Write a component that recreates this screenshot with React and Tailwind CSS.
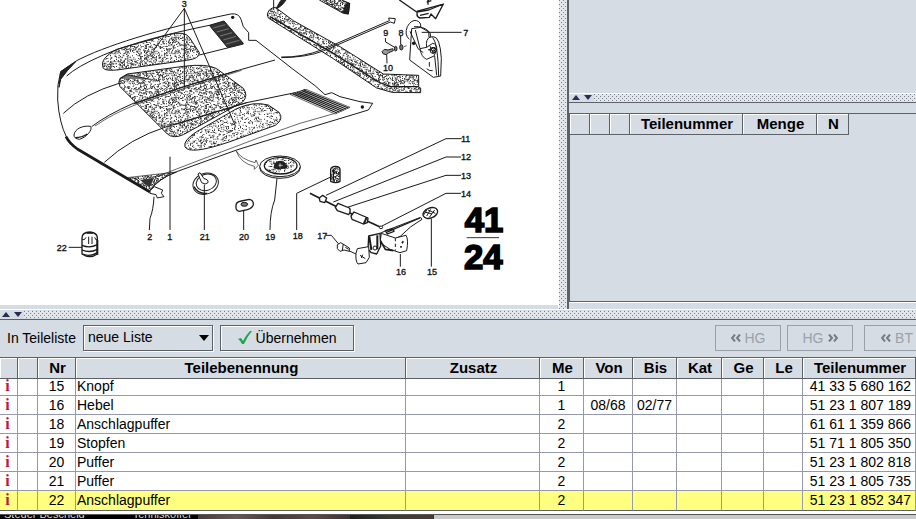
// src/App.jsx
import React from 'react';

const DOTS =
  '[background-image:conic-gradient(at_1px_1px,transparent_75%,#7b828c_0),conic-gradient(at_1px_1px,transparent_75%,#7b828c_0)] [background-size:4px_4px] [background-position:0_0,2px_2px]';

const parts = [
  { nr: 15, name: 'Knopf', qty: 1, number: '41 33 5 680 162' },
  { nr: 16, name: 'Hebel', qty: 1, from: '08/68', to: '02/77', number: '51 23 1 807 189' },
  { nr: 18, name: 'Anschlagpuffer', qty: 2, number: '61 61 1 359 866' },
  { nr: 19, name: 'Stopfen', qty: 2, number: '51 71 1 805 350' },
  { nr: 20, name: 'Puffer', qty: 2, number: '51 23 1 802 818' },
  { nr: 21, name: 'Puffer', qty: 2, number: '51 23 1 805 735' },
  { nr: 22, name: 'Anschlagpuffer', qty: 2, number: '51 23 1 852 347', selected: true },
];

// Random dots for the insulation pads and rubber seals
const stipple = (count, seed) => {
  let s = seed;
  const next = () => {
    s = (s * 16807) % 2147483647;
    return s / 2147483647;
  };
  let d = '';
  for (let i = 0; i < count; i++) {
    d += `M${Math.floor(next() * 90) * 2} ${Math.floor(next() * 90) * 2}h3v3h-3z`;
  }
  return d;
};

const DOTS_LIGHT = stipple(900, 11);
const DOTS_MID = stipple(1600, 42);
const DOTS_DARK = stipple(2300, 97);

const Patterns = () => (
  <defs>
    <pattern id="light" width="180" height="180" patternUnits="userSpaceOnUse">
      <path d={DOTS_LIGHT} fill="#333" stroke="none" />
    </pattern>
    <pattern id="mid" width="180" height="180" patternUnits="userSpaceOnUse">
      <path d={DOTS_MID} fill="#333" stroke="none" />
    </pattern>
    <pattern id="dark" width="180" height="180" patternUnits="userSpaceOnUse">
      <path d={DOTS_DARK} fill="#222" stroke="none" />
    </pattern>
  </defs>
);

const Hood = () => (
  <g transform="translate(120 0)">
    <path d="M62 215L110 182C190 140 350 88 572 42Q596 38 603 58L610 80L626 98V121H648L762 210L825 257L855 284L875 278L900 290L960 305L998 310L985 330L660 428L590 450L410 515Q350 540 330 570" />
    <path d="M62 215Q50 255 53 300Q58 370 80 412" />
    <path d="M78 410Q88 430 112 447L330 576" strokeWidth="8" />
    <path d="M80 228Q110 200 190 165Q300 118 508 76" />
    <path d="M62 215L108 184L82 212L62 238L57 262Z" fill="#222" />
    <path d="M70 340Q130 282 240 249M478 165L610 132" />
    <path d="M155 380Q200 345 280 310L432 260L605 208L705 180" />
    <path d="M165 378Q220 340 290 313L438 264L605 211" strokeWidth="2" />
    <path d="M193 487Q270 415 380 380L480 350L620 308L780 275L795 268" />
    <path d="M350 530L480 480L660 412L780 370L885 340" strokeWidth="2" />
    <path d="M102 405C104 385 130 376 152 379C158 390 140 412 118 418Q102 416 102 405Z" fill="#fff" />
    <path d="M106 413Q125 413 142 402" strokeWidth="4" />

    <path d="M190 205C180 182 200 165 230 148L385 104Q435 92 448 112L478 158Q480 176 440 181L230 210Q198 213 190 205Z" fill="url(#mid)" />
    <path d="M240 235L262 222L430 199Q500 190 530 206L610 265Q626 287 608 306L430 404Q400 417 382 402L240 260Q233 245 240 235Z" fill="url(#mid)" />
    <path d="M435 441Q428 422 470 395L590 326Q640 303 685 315L717 337Q733 357 706 376L570 425Q450 466 435 441Z" fill="url(#light)" />
    <path d="M240 236L262 224L330 238" fill="#777" />
    <path d="M280 312L432 260L590 212M400 375L620 308" />

    <path d="M508 76L552 63L610 130L562 142Z" fill="#333" />
    <path d="M520 84L556 74M530 96L566 86M540 108L576 98M550 120L588 109M558 132L598 121" stroke="#999" strokeWidth="2" />
    <path d="M750 283L798 268L930 322L885 342Z" fill="#fff" strokeWidth="2" />
    <path d="M757 281L891 339M764 279L898 336M771 277L905 333M778 275L911 330M785 272L918 327M792 270L925 324" strokeWidth="4" />
    <circle cx="578" cy="52" r="5" fill="#111" stroke="none" />
    <circle cx="967" cy="321" r="5" fill="#111" stroke="none" />

    <path d="M260 533L410 516Q360 532 328 574Z" fill="url(#dark)" strokeWidth="2" />
    <path d="M300 540L342 535L328 562Z" fill="#333" stroke="none" />
    <path d="M330 572L343 560L368 570L364 580L372 590L352 594L348 584L330 580Z" fill="#fff" />

    <path d="M433 25L340 152M433 25V260M433 25L587 380M390 470V690" />
    <path d="M588 452Q604 478 645 488L648 480L655 496L643 508V499Q602 490 588 452Z" strokeWidth="2" />
    <path d="M342 590Q340 630 330 655L328 690" />
  </g>
);

const Seal = () => (
  <g transform="translate(780 0)">
    <path d="M22 45Q24 25 46 22L100 62L240 140L370 222L476 226V262L482 264V278L396 277L350 264L220 176L25 54Z" fill="url(#mid)" />
    <path d="M30 50L220 160L355 246L390 260H475" strokeWidth="4" />
    <path d="M48 26L62 2L78 0Q68 16 54 24Z" fill="#222" />
    <path d="M178 0L250 40L265 42L269 10L245 0" fill="url(#dark)" />
    <path d="M250 38L258 12L269 10L265 42Z" fill="#222" />
    <path d="M41 0V30" />
    <path d="M64 171Q125 173 190 148L388 62L386 54L406 56L403 70L391 66L190 153Q140 172 64 173" />

    <path d="M418 0L470 36L506 30L550 12L527 56L513 42L508 52L480 54Q468 50 472 37" fill="#fff" strokeWidth="4" />
    <path d="M470 34L545 14M500 6L514 2M480 46L506 40M504 0V14" strokeWidth="4" />
    <path d="M448 118Q432 104 442 80Q454 58 470 62Q484 66 482 82L455 86L449 180L520 232L542 228L544 175Q540 110 520 110L507 112L506 94Q490 78 462 80" fill="#fff" />
    <path d="M482 82L510 98L512 110Q496 116 500 142L480 146L466 90" />
    <path d="M480 146Q484 172 500 178L522 168L530 150Q532 132 518 130L500 142" />
    <path d="M518 112Q534 130 536 228M524 168L530 226M450 94L474 146L490 158M504 150L526 142M510 138L520 162M508 186V200M500 206Q508 214 518 212" />
    <circle cx="461" cy="130" r="4" fill="#111" />
    <circle cx="519" cy="151" r="9" fill="url(#dark)" />
    <path d="M485 97H605M376 114L377 126L404 142M422 108V134M380 164L381 190" />
    <path d="M366 155L373 148L384 150L398 146L400 152L386 158L380 164L370 162Z" fill="#999" />
    <ellipse cx="407" cy="146" rx="4" ry="7" fill="#777" />
    <ellipse cx="424" cy="142" rx="5" ry="8" fill="#777" />
    <path d="M432 140L440 137" strokeWidth="2" />
  </g>
);

const SmallParts = () => (
  <g transform="translate(120 420)">
    <ellipse cx="497" cy="131" rx="39" ry="31" fill="#fff" transform="rotate(-20 497 131)" />
    <ellipse cx="499" cy="127" rx="31" ry="24" fill="#fff" transform="rotate(-20 499 127)" />
    <path d="M474 102L480 98L492 116Q506 118 504 128Q496 136 485 128Z" fill="#fff" />
    <path d="M462 140Q474 163 502 160" strokeWidth="4" />
    <path d="M493 134V270M611 196V270M712 106L704 180Q690 215 690 270" />
    <path d="M588 196Q588 186 604 183L628 178Q641 180 640 194Q638 204 622 209L598 214Q586 212 588 196Z" fill="#fff" strokeWidth="4" />
    <ellipse cx="613" cy="193" rx="10" ry="6" fill="#777" />

    <ellipse cx="720" cy="83" rx="61" ry="32" fill="#fff" />
    <ellipse cx="720" cy="79" rx="61" ry="31" fill="#fff" />
    <ellipse cx="722" cy="77" rx="49" ry="25" fill="url(#light)" strokeWidth="4" />
    <path d="M702 84Q704 64 720 64Q738 64 741 82Q722 90 702 84Z" fill="#222" />
    <path d="M716 76H728M720 70V82" stroke="#fff" strokeWidth="2" />

    <path d="M126 340V294Q126 277 150 276Q172 278 172 294V342Q150 358 126 342Z" fill="#fff" strokeWidth="4" />
    <path d="M126 296Q132 304 138 292M146 290V312M156 290V312M164 292Q168 304 172 298M140 280L160 280" />
    <path d="M126 316Q150 326 172 314M126 330Q150 340 172 328M128 342Q150 352 172 338" strokeWidth="4" />
    <path d="M172 300V344" strokeWidth="6" />
    <path d="M86 322H126" />
  </g>
);

const Lever = () => (
  <g transform="translate(840 360)">
    <path d="M545 56H498L138 226M543 111H498L160 246M543 166H498L202 262M543 220H498L306 318M50 330V220L150 172M138 346H154L176 372M361 402V440M454 296V440" />
    <path d="M152 148Q154 140 166 139Q180 140 180 148V184Q168 192 152 184Z" fill="url(#dark)" strokeWidth="4" />
    <path d="M160 146V182" strokeWidth="4" />
    <path d="M90 220L170 260M208 278L302 322" strokeWidth="5" />
    <path d="M118 234L128 226L140 234L134 248L120 244Z" fill="#fff" strokeWidth="4" />
    <path d="M166 262L174 250L208 264Q214 272 206 284L172 272Z" fill="#fff" strokeWidth="4" />
    <path d="M213 288L222 276L264 294L262 308L250 312L216 298Z" fill="#fff" strokeWidth="4" />
    <path d="M252 310L260 292" strokeWidth="6" />
    <ellipse cx="303" cy="322" rx="5" ry="4" fill="#fff" />

    <path d="M300 340L318 332L422 292L426 298Q390 318 362 348L346 356L306 344" fill="#fff" />
    <path d="M318 338L345 326L420 294M316 332L338 326L342 334L322 342Z" strokeWidth="4" />
    <path d="M304 340L346 354L378 346Q386 358 380 392L360 398L330 388L300 368Z" fill="#fff" />
    <path d="M346 354V392" strokeDasharray="10 7" />
    <path d="M366 370L370 364M363 383V378M300 360L316 388L340 392" strokeWidth="5" />
    <path d="M266 348L300 340L302 378L290 402L274 398L264 388Z" fill="#fff" strokeWidth="4" />
    <path d="M268 350L274 390M292 346L292 388" strokeWidth="6" />
    <circle cx="285" cy="384" r="6" />
    <path d="M232 386L266 380L268 412L258 428L234 432Q226 424 228 400Z" fill="#fff" />
    <path d="M240 406L256 416M248 404L244 414M206 392L228 402" />
    <path d="M172 374L182 368L192 374L208 384V394L192 390L180 394L172 386Z" fill="#fff" />
    <path d="M190 372L187 390M196 382L206 388" />
    <ellipse cx="451" cy="279" rx="23" ry="15" fill="#fff" strokeWidth="4" transform="rotate(-22 451 279)" />
    <path d="M432 284L440 270M440 288L452 268M448 292L464 270M434 276L456 282M444 270L466 280" />
  </g>
);

const callouts = [
  { n: 3, x: 553, y: 20 },
  { n: 7, x: 1397, y: 107 },
  { n: 9, x: 1157, y: 109 },
  { n: 8, x: 1203, y: 109 },
  { n: 10, x: 1164, y: 214 },
  { n: 11, x: 1397, y: 426 },
  { n: 12, x: 1398, y: 481 },
  { n: 13, x: 1398, y: 536 },
  { n: 14, x: 1398, y: 590 },
  { n: 2, x: 449, y: 719 },
  { n: 1, x: 509, y: 719 },
  { n: 21, x: 614, y: 719 },
  { n: 20, x: 732, y: 719 },
  { n: 19, x: 811, y: 719 },
  { n: 18, x: 893, y: 718 },
  { n: 17, x: 967, y: 718 },
  { n: 16, x: 1203, y: 826 },
  { n: 15, x: 1296, y: 826 },
  { n: 22, x: 185, y: 752 },
];

const Drawing = () => (
  <svg viewBox="0 0 1674 915" className="block w-full" role="img" aria-label="Bildtafel 41 24">
    <Patterns />
    <g fill="none" stroke="#1a1a1a" strokeWidth="3" strokeLinejoin="round">
      <Seal />
      <Hood />
      <SmallParts />
      <Lever />
    </g>
    <g fontFamily="Liberation Sans, sans-serif" fontSize="27" textAnchor="middle" fill="#111" stroke="#111" strokeWidth="1">
      {callouts.map((c) => (
        <text key={c.n} x={c.x} y={c.y}>{c.n}</text>
      ))}
    </g>
    <g fontFamily="Liberation Sans, sans-serif" fontSize="104" fontWeight="700" textAnchor="middle" fill="#000" stroke="#000" strokeWidth="5">
      <text x="1452" y="696">41</text>
      <text x="1450" y="808">24</text>
    </g>
    <path d="M1400 713H1497" stroke="#333" strokeWidth="3" />
  </svg>
);

const SplitArrows = () => (
  <div className="flex gap-1 bg-[#d6dce4] px-0.5">
    <button type="button" aria-label="Nach oben" className="h-2 w-2">
      <svg viewBox="0 0 8 8" className="block h-2 w-2"><path d="M0 6L4 1L8 6Z" fill="#2b2b55" /></svg>
    </button>
    <button type="button" aria-label="Nach unten" className="h-2 w-2">
      <svg viewBox="0 0 8 8" className="block h-2 w-2"><path d="M0 1H8L4 6Z" fill="#2b2b55" /></svg>
    </button>
  </div>
);

const HorizontalSplit = () => (
  <div className="flex h-[11px] border-t border-b border-t-white border-b-[#5c6067] bg-[#d6dce4] py-px">
    <SplitArrows />
    <div className={`flex-1 bg-[#e3e7ec] ${DOTS}`} />
  </div>
);

const SideHead = ({ children, className }) => (
  <th className={`h-[21px] border-r border-b border-[#5c6067] py-0 pr-0 pl-0.5 text-[15px] leading-5 font-bold shadow-[inset_1px_1px_0_#fff] ${className}`}>
    {children}
  </th>
);

const SidePanel = () => (
  <div className="flex w-[347px] shrink-0 flex-col">
    <div className="h-[93px]" />
    <div className="flex h-2.5 border-t border-b border-t-white border-b-[#5c6067] pl-px">
      <SplitArrows />
      <div className={`flex-1 bg-[#e3e7ec] ${DOTS}`} />
    </div>
    <div className="mt-2.5 flex-1 border-t border-b border-l border-[#5c6067]">
      <table className="border-separate border-spacing-0">
        <thead>
          <tr>
            <SideHead className="w-5" />
            <SideHead className="w-5" />
            <SideHead className="w-5" />
            <SideHead className="w-[113px]">Teilenummer</SideHead>
            <SideHead className="w-[74px]">Menge</SideHead>
            <SideHead className="w-8">N</SideHead>
          </tr>
        </thead>
      </table>
    </div>
    <div className="h-[7px] border-t border-white" />
  </div>
);

const NavButton = ({ children, className = '' }) => (
  <button
    type="button"
    disabled
    className={`flex h-[26px] w-[66px] shrink-0 items-center justify-center gap-1 border border-[#9aa0a9] text-[#9ba1aa] ${className}`}
  >
    {children}
  </button>
);

const Chevrons = ({ right }) => (
  <svg viewBox="0 0 10 8" className={`h-2 w-2.5 ${right ? 'rotate-180' : ''}`}>
    <path d="M4 0.5L1 4L4 7.5M9 0.5L6 4L9 7.5" fill="none" stroke="#757b84" strokeWidth="2" />
  </svg>
);

const Toolbar = () => (
  <div className="flex h-[37px] items-start overflow-hidden pt-[5px] pl-[7px]">
    <label htmlFor="list" className="w-[76px] shrink-0 leading-[26px] whitespace-nowrap">In Teileliste</label>
    <div className="relative mr-[7px] shrink-0">
      <select
        id="list"
        className="block h-[26px] w-[130px] appearance-none border border-[#5c6067] bg-[#d6dce4] pl-1 pb-0.5 shadow-[inset_1px_1px_0_#fff,1px_1px_0_#fff]"
      >
        <option>neue Liste</option>
      </select>
      <svg viewBox="0 0 10 6" className="pointer-events-none absolute top-2.5 right-1 h-1.5 w-2.5">
        <path d="M0 0H10L5 6Z" fill="#000" />
      </svg>
    </div>
    <button
      type="button"
      className="flex h-[26px] w-[134px] shrink-0 items-center justify-center gap-1 border border-[#5c6067] shadow-[inset_1px_1px_0_#fff,1px_1px_0_#fff]"
    >
      <svg viewBox="0 0 14 14" className="h-3.5 w-3.5">
        <path d="M0 8L3 7L5 10Q8 4 12 0L14 0Q9 6 6 13H4Q3 10 0 8Z" fill="#1fa64a" />
      </svg>
      Übernehmen
    </button>
    <div className="ml-auto flex">
      <NavButton><Chevrons />HG</NavButton>
      <NavButton className="ml-1.5">HG<Chevrons right /></NavButton>
      <NavButton className="-mr-3.5 ml-[11px]"><Chevrons />BT</NavButton>
    </div>
  </div>
);

const heads = ['', '', 'Nr', 'Teilebenennung', 'Zusatz', 'Me', 'Von', 'Bis', 'Kat', 'Ge', 'Le', 'Teilenummer'];

const PartRow = ({ part, partlyHidden, isLast }) => {
  const line = partlyHidden ? 'h-[17px] leading-[14px] pb-0.5' : isLast ? 'h-5 leading-[18px] pb-px' : 'h-[19px] leading-[18px]';
  const edge = isLast ? 'border-b-[#5c6067]' : 'border-b-[#9698b0]';
  const cell = `${line} ${edge} border-r border-b border-r-[#9698b0] whitespace-nowrap`;
  return (
    <tr className={part.selected ? 'bg-[#ffff80]' : 'bg-white'}>
      <td className={`${cell} pr-0.5`}>
        <span className="block text-center font-['Liberation_Serif',serif] text-[16px] leading-[14px] font-bold text-[#c01838]">i</span>
      </td>
      <td className={cell} />
      <td className={`${cell} text-center`}>{part.nr}</td>
      <td className={`${cell} pl-px`}>{part.name}</td>
      <td className={cell} />
      <td className={`${cell} text-center`}>{part.qty}</td>
      <td className={`${cell} text-center`}>{part.from}</td>
      <td className={`${cell} text-center`}>{part.to}</td>
      <td className={cell} />
      <td className={cell} />
      <td className={cell} />
      <td className={`${cell} pr-1 text-right`}>{part.number}</td>
    </tr>
  );
};

const PartsTable = () => (
  <table className="w-full table-fixed border-separate border-spacing-0 border-t border-[#5c6067]">
    <colgroup>
      <col className="w-[18px]" />
      <col className="w-5" />
      <col className="w-[38px]" />
      <col />
      <col className="w-[134px]" />
      <col className="w-11" />
      <col className="w-[49px]" />
      <col className="w-11" />
      <col className="w-[45px]" />
      <col className="w-[42px]" />
      <col className="w-[39px]" />
      <col className="w-[113px]" />
    </colgroup>
    <thead>
      <tr>
        {heads.map((h, i) => (
          <th key={i} className="h-[21px] border-r border-b border-[#5c6067] py-0 pr-0 pl-0.5 text-[15px] leading-5 font-bold shadow-[inset_1px_1px_0_#fff]">
            {h}
          </th>
        ))}
      </tr>
    </thead>
    <tbody>
      {parts.map((part, i) => (
        <PartRow key={part.nr} part={part} partlyHidden={i === 0} isLast={i === parts.length - 1} />
      ))}
    </tbody>
  </table>
);

// Sliver of the desktop that stays visible under the window
const Desktop = () => (
  <div className="flex h-[5px] items-end overflow-hidden border-t border-[#555] bg-[#c9c9c9] text-[11px] leading-[9px] text-[#ddd]">
    <div className="flex w-[198px] items-end gap-12 bg-black pl-1 whitespace-nowrap">
      <span>Steuer Bescheid</span>
      <span>Tenniskoffer</span>
    </div>
    <div className="h-1 w-[152px] bg-[linear-gradient(90deg,#4a3a3a,#6b5656_25%,#463838_50%,#5e4a4a_75%,#41342f)]" />
    <div className="h-1 w-[84px] border-r border-[#333] bg-[linear-gradient(90deg,#1d211c,#3a3c30_50%,#4c3a35)]" />
  </div>
);

const App = () => {
  return (
    <div className="overflow-hidden bg-[#d6dce4] font-['Liberation_Sans',sans-serif] text-[14px] text-black">
      <div className="flex">
        <div className="min-w-0 flex-1 pb-1">
          <div className="bg-white">
            <Drawing />
          </div>
        </div>
        <div className="flex w-[11px] shrink-0 border-r-2 border-l border-r-[#5c6067] border-l-white bg-[#d6dce4]">
          <div className={`flex-1 bg-[#e3e7ec] ${DOTS}`} />
        </div>
        <SidePanel />
      </div>
      <HorizontalSplit />
      <Toolbar />
      <PartsTable />
      <div className="h-[3px] bg-white" />
      <Desktop />
    </div>
  );
};

export default App;
